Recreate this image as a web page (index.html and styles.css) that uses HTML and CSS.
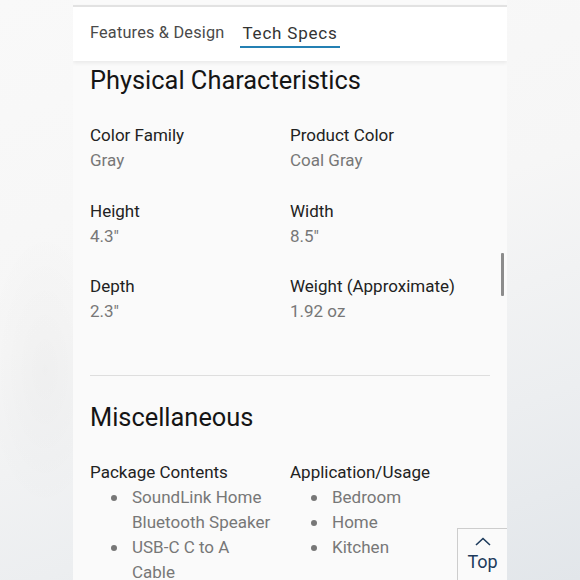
FILE: index.html
```html
<!DOCTYPE html>
<html lang="en">
<head>
<meta charset="utf-8">
<title>Tech Specs</title>
<link rel="stylesheet" href="styles.css">
</head>
<body>
<div class="page">
  <div class="tabs">
    <span class="tab">Features &amp; Design</span>
    <span class="tab active">Tech Specs</span>
  </div>
  <div class="content">
    <h2 class="section-title">Physical Characteristics</h2>
    <div class="spec-grid">
      <div class="spec"><div class="label">Color Family</div><div class="value">Gray</div></div>
      <div class="spec"><div class="label">Product Color</div><div class="value">Coal Gray</div></div>
      <div class="spec"><div class="label">Height</div><div class="value">4.3"</div></div>
      <div class="spec"><div class="label">Width</div><div class="value">8.5"</div></div>
      <div class="spec"><div class="label">Depth</div><div class="value">2.3"</div></div>
      <div class="spec"><div class="label">Weight (Approximate)</div><div class="value">1.92 oz</div></div>
    </div>
    <hr class="divider">
    <h2 class="section-title">Miscellaneous</h2>
    <div class="spec-grid">
      <div class="spec">
        <div class="label">Package Contents</div>
        <ul class="list">
          <li>SoundLink Home Bluetooth Speaker</li>
          <li>USB-C C to A Cable</li>
        </ul>
      </div>
      <div class="spec">
        <div class="label">Application/Usage</div>
        <ul class="list">
          <li>Bedroom</li>
          <li>Home</li>
          <li>Kitchen</li>
        </ul>
      </div>
    </div>
  </div>
  <div class="scrollbar"></div>
  <div class="top-btn">
    <svg class="chev" width="16" height="9" viewBox="0 0 16 9"><path d="M1 8 L8 1.5 L15 8" fill="none" stroke="#1d3b5c" stroke-width="1.6"/></svg>
    <span class="top-text">Top</span>
  </div>
</div>
</body>
</html>
```
FILE: styles.css
```css
html, body {
  margin: 0;
  padding: 0;
  height: 580px;
  overflow: hidden;
}
body {
  font-family: Roboto, "Noto Sans", sans-serif;
  background:
    radial-gradient(ellipse 60px 140px at 45px 370px, rgba(0,0,0,0.025), rgba(0,0,0,0) 100%),
    linear-gradient(160deg, #f9f9f9 0%, #f6f6f6 45%, #eceef0 75%, #e2e6ea 100%);
}
.page {
  position: relative;
  width: 434px;
  height: 580px;
  margin-left: 73px;
  background: #fafafa;
  overflow: hidden;
}
.tabs {
  margin-top: 5px;
  border-top: 2px solid #e2e2e2;
  height: 54px;
  background: #fff;
  box-shadow: 0 2px 4px rgba(0,0,0,0.07);
  display: flex;
  align-items: flex-start;
  gap: 16px;
  padding-left: 17px;
  position: relative;
  z-index: 1;
}
.tab {
  font-size: 16.3px;
  line-height: 20px;
  padding-top: 16px;
  color: #4a4a4a;
  letter-spacing: 0.2px;
}
.tab.active {
  color: #333;
  font-size: 17px;
  letter-spacing: 0.8px;
  padding: 16px 2px 3px;
  border-bottom: 2px solid #2480b3;
}
.content {
  padding: 0 17px;
}
.section-title {
  margin: 4px 0 0;
  font-size: 25.4px;
  line-height: 30px;
  font-weight: 400;
  color: #151515;
}
.spec-grid {
  display: grid;
  grid-template-columns: 200px 200px;
  row-gap: 25.5px;
  margin-top: 28px;
}
.label {
  font-size: 17px;
  line-height: 25px;
  color: #222;
}
.value {
  font-size: 17px;
  line-height: 25px;
  color: #777;
}
.divider {
  border: 0;
  border-top: 1px solid #dedede;
  margin: 51px 0 26px;
}
.list {
  margin: 0;
  padding: 0 18px 0 42px;
  list-style: none;
  font-size: 17px;
  line-height: 25px;
  color: #777;
}
.list li {
  position: relative;
}
.list li::before {
  content: "";
  position: absolute;
  left: -21px;
  top: 10px;
  width: 6px;
  height: 6px;
  border-radius: 50%;
  background: #777;
}
.scrollbar {
  position: absolute;
  left: 428px;
  top: 253px;
  width: 3px;
  height: 43px;
  background: #8c8c8c;
  border-radius: 1px;
}
.top-btn {
  position: absolute;
  left: 384px;
  top: 528px;
  width: 50px;
  height: 60px;
  box-sizing: border-box;
  border: 1px solid #cdcdcd;
  border-right: 0;
  background: #fafafa;
  display: flex;
  flex-direction: column;
  align-items: center;
  padding-top: 8px;
}
.chev {
  display: block;
}
.top-text {
  font-size: 18px;
  line-height: 22px;
  color: #1d3b5c;
  margin-top: 5px;
}
```
